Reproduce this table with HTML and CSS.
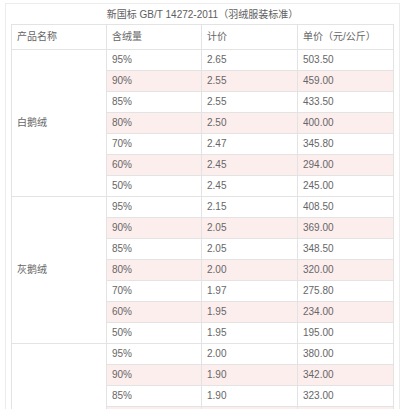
FILE: index.html
```html
<!DOCTYPE html>
<html lang="zh-CN">
<head>
<meta charset="utf-8">
<title>新国标 GB/T 14272-2011</title>
<link rel="stylesheet" href="styles.css">
</head>
<body>
<div class="wrap">
  <div class="title">新国标 GB/T 14272-2011（羽绒服装标准）</div>
  <table class="grid">
    <colgroup>
      <col class="c1"><col class="c2"><col class="c3"><col class="c4">
    </colgroup>
    <thead>
      <tr class="head"><td>产品名称</td><td>含绒量</td><td>计价</td><td>单价（元/公斤）</td></tr>
    </thead>
    <tbody>
      <tr><td class="name" rowspan="7">白鹅绒</td><td>95%</td><td>2.65</td><td>503.50</td></tr>
      <tr class="pink"><td>90%</td><td>2.55</td><td>459.00</td></tr>
      <tr><td>85%</td><td>2.55</td><td>433.50</td></tr>
      <tr class="pink"><td>80%</td><td>2.50</td><td>400.00</td></tr>
      <tr><td>70%</td><td>2.47</td><td>345.80</td></tr>
      <tr class="pink"><td>60%</td><td>2.45</td><td>294.00</td></tr>
      <tr><td>50%</td><td>2.45</td><td>245.00</td></tr>

      <tr><td class="name" rowspan="7">灰鹅绒</td><td>95%</td><td>2.15</td><td>408.50</td></tr>
      <tr class="pink"><td>90%</td><td>2.05</td><td>369.00</td></tr>
      <tr><td>85%</td><td>2.05</td><td>348.50</td></tr>
      <tr class="pink"><td>80%</td><td>2.00</td><td>320.00</td></tr>
      <tr><td>70%</td><td>1.97</td><td>275.80</td></tr>
      <tr class="pink"><td>60%</td><td>1.95</td><td>234.00</td></tr>
      <tr><td>50%</td><td>1.95</td><td>195.00</td></tr>

      <tr><td class="name" rowspan="4"></td><td>95%</td><td>2.00</td><td>380.00</td></tr>
      <tr class="pink"><td>90%</td><td>1.90</td><td>342.00</td></tr>
      <tr><td>85%</td><td>1.90</td><td>323.00</td></tr>
      <tr class="pink tail"><td></td><td></td><td></td></tr>
    </tbody>
  </table>
</div>
</body>
</html>
```

FILE: styles.css
```css
html, body {
  margin: 0;
  padding: 0;
  background: #ffffff;
  overflow: hidden;
}

body {
  font-family: "Liberation Sans", "Noto Sans CJK SC", sans-serif;
  font-size: 10px;
  color: #666666;
}

.wrap {
  margin: 3px 0 0 5px;
  width: 395px;
  box-sizing: border-box;
  border: 1px solid #ececec;
  border-bottom: none;
}

.title {
  height: 20px;
  line-height: 21px;
  text-align: center;
  color: #5e5e5e;
}

.grid {
  margin-left: 5px;
  width: 382px;
  table-layout: fixed;
  border-collapse: collapse;
}

.c1 { width: 95px; }
.c2 { width: 95px; }
.c3 { width: 96px; }
.c4 { width: 96px; }

.grid td {
  border: 1px solid #e3e3e3;
  padding: 0 5px;
  height: 20px;
  line-height: 12px;
  vertical-align: middle;
  white-space: nowrap;
  overflow: hidden;
}

.grid .head td {
  height: 24px;
}

.grid .pink td {
  background: #fdeeee;
}

.grid td.name {
  background: #ffffff;
}
```
